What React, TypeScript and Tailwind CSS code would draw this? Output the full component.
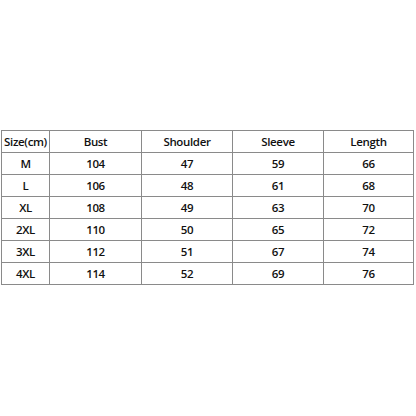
import React from "react";

const rows = [
  ["M", "104", "47", "59", "66"],
  ["L", "106", "48", "61", "68"],
  ["XL", "108", "49", "63", "70"],
  ["2XL", "110", "50", "65", "72"],
  ["3XL", "112", "51", "67", "74"],
  ["4XL", "114", "52", "69", "76"],
];

const headers = ["Size(cm)", "Bust", "Shoulder", "Sleeve", "Length"];
const widths = ["w-[48px]", "w-[92px]", "w-[91px]", "w-[91px]", "w-[90px]"];

export default function App() {
  return (
    <div className="w-[416px] h-[416px] bg-white pt-[130px] pl-px" style={{ fontFamily: '"Open Sans", sans-serif' }}>
      <table className="border-collapse table-fixed w-[412px] text-[11.5px] tracking-[-0.35px] font-semibold text-[#111]">
        <thead>
          <tr className="h-[22px]">
            {headers.map((h, i) => (
              <th key={h} className={`${widths[i]} border border-[#8a8a8a] p-0 text-center font-semibold leading-none`}>
                {h}
              </th>
            ))}
          </tr>
        </thead>
        <tbody>
          {rows.map((r) => (
            <tr key={r[0]} className="h-[22px]">
              {r.map((c, i) => (
                <td key={i} className="border border-[#8a8a8a] p-0 text-center leading-none">
                  {c}
                </td>
              ))}
            </tr>
          ))}
        </tbody>
      </table>
    </div>
  );
}
